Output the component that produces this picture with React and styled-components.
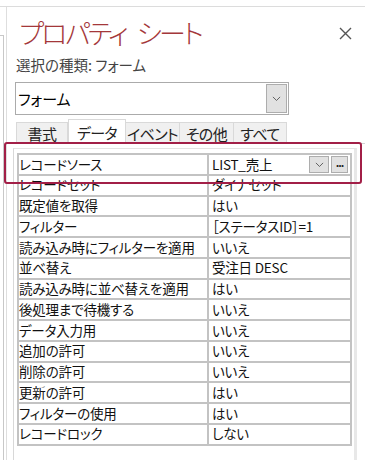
import React from 'react';
import styled, { createGlobalStyle } from 'styled-components';

const GlobalStyle = createGlobalStyle`
	html, body {
		margin: 0;
		padding: 0;
		background: #fff;
	}
	body {
		font-family: "Noto Sans CJK JP", "Noto Sans", sans-serif;
		color: #000;
		overflow: hidden;
	}
`;

const Screen = styled.div`
	margin-top: 6px;
	border-top: 1px solid #dcdcdc;
	height: 453px;
	display: flex;
	position: relative;
	overflow: hidden;
`;

const Sliver = styled.div`
	width: 6px;
	flex: none;
	padding-top: 28px;

	div {
		width: 3px;
		height: 100%;
		border-top: 1px solid #c8c8c8;
		border-right: 1px solid #c8c8c8;
	}
`;

const Pane = styled.div`
	flex: 1;
	border-left: 1px solid #dedede;
	padding-left: 6px;
	display: flex;
	flex-direction: column;
`;

const Header = styled.div`
	display: flex;
	align-items: flex-start;
	justify-content: space-between;
	padding: 9px 12px 0 6px;
	height: 39px;
`;

const Title = styled.h1`
	margin: 0;
	font-size: 27px;
	font-weight: 300;
	line-height: 34px;
	color: #a4373a;
	font-feature-settings: "palt";
	letter-spacing: -2.6px;
	word-spacing: 7px;
	white-space: nowrap;
`;

const Close = styled.button`
	border: none;
	background: none;
	padding: 0;
	margin-top: 11px;
	width: 14px;
	height: 14px;
	display: flex;
`;

const Kind = styled.div`
	padding-left: 3px;
	font-size: 14.5px;
	line-height: 20px;
	color: #444;
	font-feature-settings: "palt";
`;

const Select = styled.div`
	margin: 7px 0 0 2px;
	width: 274px;
	height: 33px;
	box-sizing: border-box;
	border: 1px solid #ababab;
	display: flex;
	align-items: center;
	justify-content: space-between;
	padding: 1px 1px 1px 2px;
	font-size: 15px;
	font-feature-settings: "palt";
`;

const DropButton = styled.span`
	box-sizing: border-box;
	width: ${(p) => p.$w || 21}px;
	height: 100%;
	background: #e1e1e1;
	border: 1px solid #adadad;
	display: flex;
	align-items: center;
	justify-content: center;
	flex: none;
`;

const Tabs = styled.div`
	margin: 4px 0 0 0;
	display: flex;
	align-items: flex-end;
	height: 24px;
	border-bottom: 1px solid #d4d4d4;
	padding-left: 3px;
`;

const Tab = styled.div`
	box-sizing: border-box;
	width: ${(p) => p.$w}px;
	height: ${(p) => (p.$active ? 25 : 21)}px;
	margin-bottom: ${(p) => (p.$active ? -1 : 0)}px;
	background: ${(p) => (p.$active ? '#fff' : '#f0f0f0')};
	border: 1px solid #d9d9d9;
	border-bottom: ${(p) => (p.$active ? 'none' : '1px solid #d9d9d9')};
	border-left: ${(p) => (p.$first || p.$active ? '1px solid #d9d9d9' : 'none')};
	display: flex;
	align-items: center;
	justify-content: center;
	font-size: 15px;
	line-height: 1;
	letter-spacing: -0.6px;
	white-space: nowrap;
	color: #222;
	font-feature-settings: "palt";
	padding-top: ${(p) => (p.$active ? 0 : 1)}px;
`;

const Panel = styled.div`
	flex: 1;
	margin-top: 4px;
	width: 344px;
	box-sizing: border-box;
	border-top: 1px solid #e3e3e3;
	border-left: 1px solid #d8d8d8;
	border-right: 3px solid #e8e8e8;
	padding: 4px 2px 0 3px;
`;

const Grid = styled.div`
	display: grid;
	grid-template-columns: 188px 1fr;
	grid-auto-rows: 18.75px;
	gap: 2px;
	padding: 2px;
	background: #c3c3c3;
`;

const Cell = styled.div`
	background: #fff;
	display: flex;
	align-items: center;
	padding-left: ${(p) => (p.$value ? 3 : 0)}px;
	font-size: 13.5px;
	line-height: 1;
	letter-spacing: -0.2px;
	white-space: nowrap;
	font-feature-settings: "palt";
	color: #111;
`;

const ValueText = styled.span`
	flex: 1;
`;

const RowButtons = styled.span`
	display: flex;
	gap: 2px;
	height: 17px;
	padding-right: 2px;
`;

const Ellipsis = styled.span`
	font-size: 11px;
	font-weight: 700;
	line-height: 1;
	letter-spacing: -1px;
	margin-top: -3px;
	color: #222;
`;

const Highlight = styled.div`
	position: absolute;
	left: 4px;
	top: 135px;
	width: 358px;
	height: 42px;
	box-sizing: border-box;
	border: 2px solid #a21f47;
	border-radius: 3px;
	pointer-events: none;
`;

const Chevron = ({ size = 9 }) => (
	<svg width={size} height={size * 0.6} viewBox="0 0 10 6">
		<path d="M1 1 L5 5 L9 1" fill="none" stroke="#555" strokeWidth="1" />
	</svg>
);

const CloseIcon = () => (
	<svg width="13" height="13" viewBox="0 0 13 13">
		<path d="M1 1 L12 12 M12 1 L1 12" stroke="#555" strokeWidth="1.4" />
	</svg>
);

const tabs = [
	{ label: '書式', w: 52 },
	{ label: 'データ', w: 58, active: true },
	{ label: 'イベント', w: 54 },
	{ label: 'その他', w: 54 },
	{ label: 'すべて', w: 53 },
];

const rows = [
	['レコードソース', 'LIST_売上'],
	['レコードセット', 'ダイナセット'],
	['既定値を取得', 'はい'],
	['フィルター', '［ステータスID］=1'],
	['読み込み時にフィルターを適用', 'いいえ'],
	['並べ替え', '受注日 DESC'],
	['読み込み時に並べ替えを適用', 'はい'],
	['後処理まで待機する', 'いいえ'],
	['データ入力用', 'いいえ'],
	['追加の許可', 'いいえ'],
	['削除の許可', 'いいえ'],
	['更新の許可', 'はい'],
	['フィルターの使用', 'はい'],
	['レコードロック', 'しない'],
];

export default function App() {
	return (
		<>
			<GlobalStyle />
			<Screen>
				<Sliver>
					<div />
				</Sliver>
				<Pane>
					<Header>
						<Title>プロパティ シート</Title>
						<Close aria-label="閉じる">
							<CloseIcon />
						</Close>
					</Header>
					<Kind>選択の種類: フォーム</Kind>
					<Select>
						<span>フォーム</span>
						<DropButton>
							<Chevron />
						</DropButton>
					</Select>
					<Tabs>
						{tabs.map((t, i) => (
							<Tab key={t.label} $w={t.w} $active={t.active} $first={i === 0}>
								{t.label}
							</Tab>
						))}
					</Tabs>
					<Panel>
						<Grid>
							{rows.map(([label, value], i) => (
								<React.Fragment key={label}>
									<Cell>{label}</Cell>
									<Cell $value>
										<ValueText>{value}</ValueText>
										{i === 0 && (
											<RowButtons>
												<DropButton $w={20}>
													<Chevron />
												</DropButton>
												<DropButton $w={17}>
													<Ellipsis>...</Ellipsis>
												</DropButton>
											</RowButtons>
										)}
									</Cell>
								</React.Fragment>
							))}
						</Grid>
					</Panel>
				</Pane>
				<Highlight />
			</Screen>
		</>
	);
}
